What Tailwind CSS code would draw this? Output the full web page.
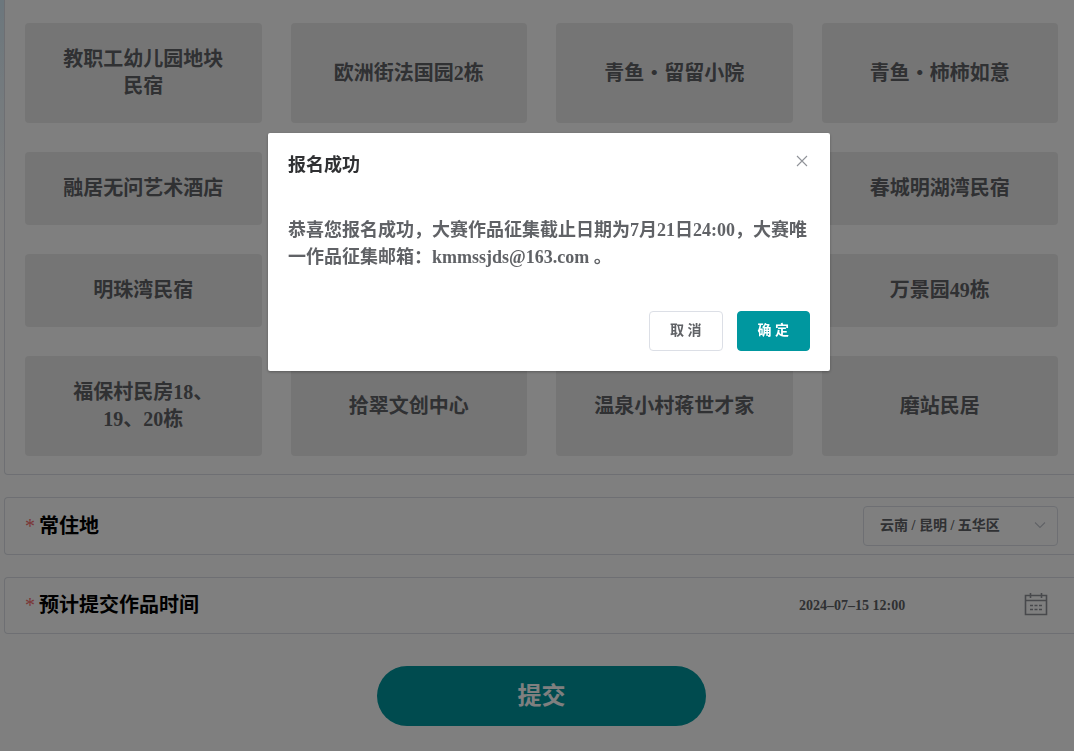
<!DOCTYPE html>
<html lang="zh-CN">
<head>
  <meta charset="UTF-8" />
  <meta name="viewport" content="width=device-width, initial-scale=1" />
  <title>大赛报名</title>
  <script src="https://cdn.jsdelivr.net/npm/@tailwindcss/browser@4"></script>
</head>
<body class="min-h-screen overflow-hidden bg-white bg-linear-to-b from-[#d8eefa] to-white to-[220px] pl-1 font-['Liberation_Serif','Noto_Sans_CJK_SC',serif] font-bold">

  <!-- Form -->
  <form class="min-h-screen bg-white">

    <!-- Venue options -->
    <section class="rounded-bl border-b border-l border-[#dcdfe6] pt-[23px] pr-4 pb-[18px] pl-5">
      <div class="grid grid-cols-4 gap-[29px] text-center text-[20px] leading-[27px] text-[#606266]">
        <button type="button" class="rounded bg-[#ebebeb] px-9 py-[23px]">教职工幼儿园地块民宿</button>
        <button type="button" class="rounded bg-[#ebebeb] px-9 py-[23px]">欧洲街法国园2栋</button>
        <button type="button" class="rounded bg-[#ebebeb] px-9 py-[23px]">青鱼・留留小院</button>
        <button type="button" class="rounded bg-[#ebebeb] px-9 py-[23px]">青鱼・柿柿如意</button>
        <button type="button" class="rounded bg-[#ebebeb] px-9 py-[23px]">融居无问艺术酒店</button>
        <button type="button" class="rounded bg-[#ebebeb] px-9 py-[23px]" aria-label="选项"></button>
        <button type="button" class="rounded bg-[#ebebeb] px-9 py-[23px]" aria-label="选项"></button>
        <button type="button" class="rounded bg-[#ebebeb] px-9 py-[23px]">春城明湖湾民宿</button>
        <button type="button" class="rounded bg-[#ebebeb] px-9 py-[23px]">明珠湾民宿</button>
        <button type="button" class="rounded bg-[#ebebeb] px-9 py-[23px]" aria-label="选项"></button>
        <button type="button" class="rounded bg-[#ebebeb] px-9 py-[23px]" aria-label="选项"></button>
        <button type="button" class="rounded bg-[#ebebeb] px-9 py-[23px]">万景园49栋</button>
        <button type="button" class="rounded bg-[#ebebeb] px-9 py-[23px]">福保村民房18、19、20栋</button>
        <button type="button" class="rounded bg-[#ebebeb] px-9 py-[23px]">拾翠文创中心</button>
        <button type="button" class="rounded bg-[#ebebeb] px-9 py-[23px]">温泉小村蒋世才家</button>
        <button type="button" class="rounded bg-[#ebebeb] px-9 py-[23px]">磨站民居</button>
      </div>
    </section>

    <!-- Residence -->
    <section class="mt-[22px] flex items-center justify-between rounded-l border-y border-l border-[#dcdfe6] py-2 pr-4 pl-5">
      <label for="residence" class="flex items-center gap-1 text-[20px] leading-[27px] text-black">
        <span class="font-normal text-[#f56c6c]">*</span>常住地
      </label>
      <div class="relative">
        <select id="residence" class="h-10 w-[195px] appearance-none rounded border border-[#dcdfe6] bg-white pr-8 pl-4 text-sm text-[#606266]">
          <option>云南 / 昆明 / 五华区</option>
        </select>
        <svg class="pointer-events-none absolute top-3.5 right-3 h-3 w-3" viewBox="0 0 12 12" fill="none" stroke="#c0c4cc" stroke-width="1.1"><path d="M1 2.5l5 5 5-5" /></svg>
      </div>
    </section>

    <!-- Submission time -->
    <section class="mt-[22px] flex items-center justify-between rounded-l border-y border-l border-[#dcdfe6] py-[14px] pr-[26px] pl-5">
      <label for="submitTime" class="flex items-center gap-1 text-[20px] leading-[27px] text-black">
        <span class="font-normal text-[#f56c6c]">*</span>预计提交作品时间
      </label>
      <div class="flex items-center">
        <input type="text" id="submitTime" value="2024–07–15 12:00" class="w-[225px] text-sm text-[#606266] outline-none" />
        <svg class="h-6 w-6 overflow-visible" viewBox="0 2 24 24" fill="none" stroke="#909399" stroke-width="1.6">
          <path d="M1.5 3.5h21v19h-21zM1.5 8.5h21M6.5 1v5M17.5 1v5" />
          <path d="M6 13.5h3M10.5 13.5h3M15 13.5h3M6 17.5h3M10.5 17.5h3M15 17.5h3" />
        </svg>
      </div>
    </section>

    <div class="flex justify-center py-8 pl-[5px]">
      <button type="submit" class="h-[60px] w-[329px] rounded-full bg-[#00979f] text-2xl text-white">提交</button>
    </div>
  </form>

  <!-- Success dialog -->
  <div class="fixed inset-0 flex items-start justify-center bg-black/50 pt-[133px] pl-6">
    <div role="dialog" aria-modal="true" aria-labelledby="dialogTitle" class="w-[562px] rounded-xs bg-white p-5 shadow-[0_1px_3px_rgba(0,0,0,0.3)]">
      <div class="flex items-start justify-between pb-2.5">
        <h2 id="dialogTitle" class="text-lg leading-6 text-[#303133]">报名成功</h2>
        <button type="button" aria-label="关闭" class="h-4 w-4">
          <svg class="h-4 w-4" viewBox="0 0 16 16" fill="none" stroke="#909399" stroke-width="1.1"><path d="M3 3l10 10M13 3L3 13" /></svg>
        </button>
      </div>
      <p class="py-[30px] text-lg leading-[27px] text-[#606266]">恭喜您报名成功，大赛作品征集截止日期为7月21日24:00，大赛唯一作品征集邮箱：kmmssjds@163.com 。</p>
      <div class="flex justify-end gap-3.5 pt-2.5 text-sm">
        <button type="button" class="h-10 rounded border border-[#dcdfe6] bg-white px-5 text-[#606266]">取 消</button>
        <button type="button" class="h-10 rounded border border-[#00979f] bg-[#00979f] px-5 text-white">确 定</button>
      </div>
    </div>
  </div>

</body>
</html>
